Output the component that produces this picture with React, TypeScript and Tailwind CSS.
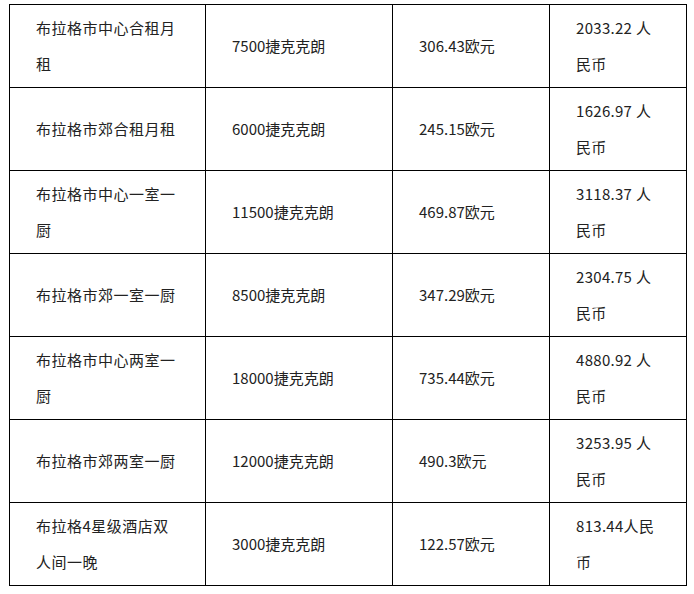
import React from "react";

const rows: [string, string, string, string][] = [
  ["布拉格市中心合租月租", "7500捷克克朗", "306.43欧元", "2033.22 人民币"],
  ["布拉格市郊合租月租", "6000捷克克朗", "245.15欧元", "1626.97 人民币"],
  ["布拉格市中心一室一厨", "11500捷克克朗", "469.87欧元", "3118.37 人民币"],
  ["布拉格市郊一室一厨", "8500捷克克朗", "347.29欧元", "2304.75 人民币"],
  ["布拉格市中心两室一厨", "18000捷克克朗", "735.44欧元", "4880.92 人民币"],
  ["布拉格市郊两室一厨", "12000捷克克朗", "490.3欧元", "3253.95 人民币"],
  ["布拉格4星级酒店双人间一晚", "3000捷克克朗", "122.57欧元", "813.44人民币"],
];

export default function App() {
  return (
    <div
      className="w-[694px] h-[594px] bg-white pl-[9px] pt-[4px] text-[15px] text-[#222]"
      style={{ fontFamily: '"Noto Sans CJK SC", "Noto Sans", sans-serif' }}
    >
      <table className="border-collapse table-fixed w-[677px]">
        <colgroup>
          <col className="w-[196px]" />
          <col className="w-[187px]" />
          <col className="w-[157px]" />
          <col className="w-[137px]" />
        </colgroup>
        <tbody>
          {rows.map((r, i) => (
            <tr key={i} className="h-[83px]">
              <td className="border border-black px-[26px] py-[4px] leading-[36px] tracking-[0.5px] align-middle">
                {r[0]}
              </td>
              <td className="border border-black px-[26px] py-[4px] leading-[36px] align-middle">
                {r[1]}
              </td>
              <td className="border border-black px-[26px] py-[4px] leading-[36px] align-middle">
                {r[2]}
              </td>
              <td className="border border-black pl-[26px] pr-[24px] py-[4px] leading-[36px] tracking-[0.3px] align-middle">
                {r[3]}
              </td>
            </tr>
          ))}
        </tbody>
      </table>
    </div>
  );
}
